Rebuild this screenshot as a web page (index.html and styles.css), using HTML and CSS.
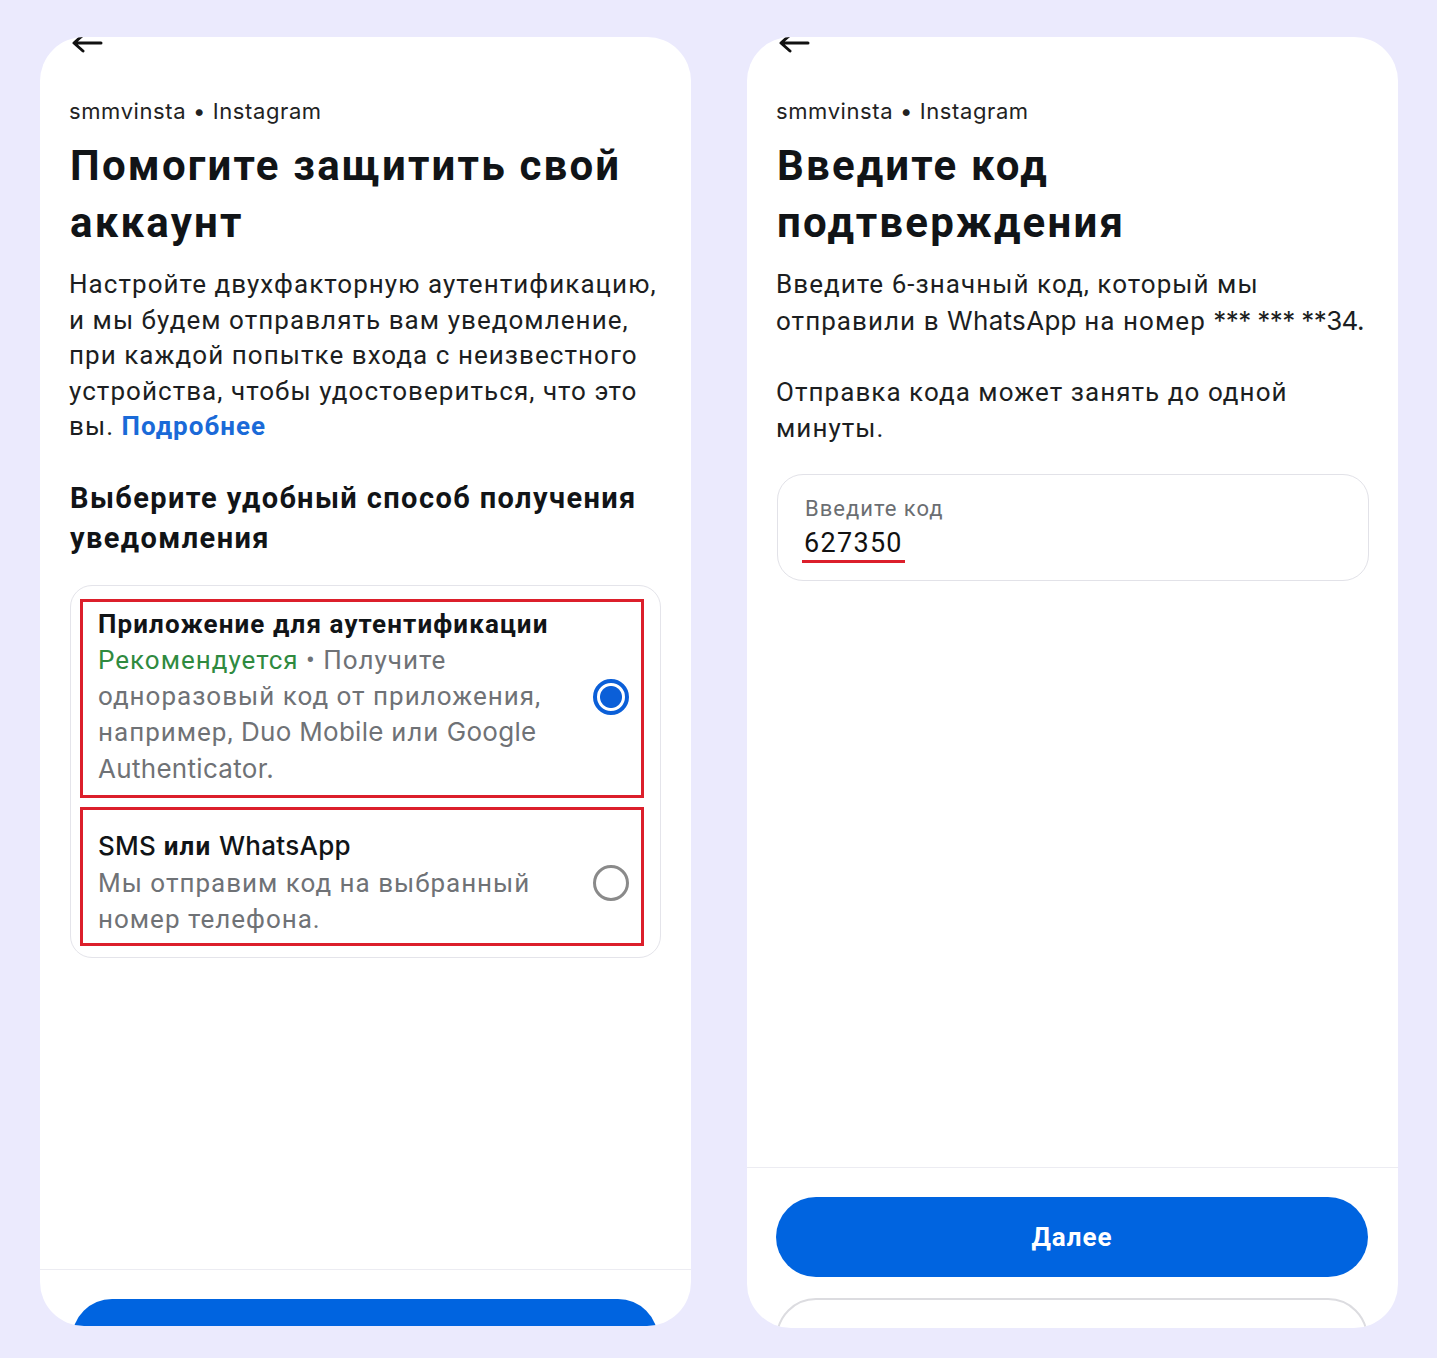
FILE: index.html
```html
<!DOCTYPE html>
<html lang="ru">
<head>
<meta charset="utf-8">
<title>Двухфакторная аутентификация</title>
<link rel="stylesheet" href="styles.css">
</head>
<body>
<div class="screens">
  <section class="card card-left">
    <svg class="back" width="32" height="20" viewBox="0 0 32 20"><path d="M30 9H4M12 1L3 9l9 8" fill="none" stroke="#111" stroke-width="3" stroke-linecap="round" stroke-linejoin="round"/></svg>
    <div class="main">
      <div class="account lat">smmvinsta • Instagram</div>
      <h1 class="title">Помогите защитить свой аккаунт</h1>
      <p class="text">Настройте двухфакторную аутентификацию, и мы будем отправлять вам уведомление, при каждой попытке входа с неизвестного устройства, чтобы удостовериться, что это вы. <a class="link" href="#">Подробнее</a></p>
      <h2 class="subtitle">Выберите удобный способ получения уведомления</h2>
      <div class="options">
        <div class="option option-first">
          <div class="opt-body">
            <div class="opt-title">Приложение для аутентификации</div>
            <div class="opt-desc"><span class="green">Рекомендуется</span> • Получите одноразовый код от приложения, например, <span class="lat">Duo Mobile</span> или <span class="lat">Google Authenticator.</span></div>
          </div>
          <span class="radio radio-on"></span>
        </div>
        <div class="option option-second">
          <div class="opt-body">
            <div class="opt-title"><span class="lat reg">SMS</span> или <span class="lat reg">WhatsApp</span></div>
            <div class="opt-desc">Мы отправим код на выбранный номер телефона.</div>
          </div>
          <span class="radio"></span>
        </div>
      </div>
    </div>
    <div class="footer footer-left">
      <div class="btn btn-primary"></div>
    </div>
  </section>

  <section class="card card-right">
    <svg class="back" width="32" height="20" viewBox="0 0 32 20"><path d="M30 9H4M12 1L3 9l9 8" fill="none" stroke="#111" stroke-width="3" stroke-linecap="round" stroke-linejoin="round"/></svg>
    <div class="main">
      <div class="account lat">smmvinsta • Instagram</div>
      <h1 class="title">Введите код подтверждения</h1>
      <p class="text">Введите 6-значный код, который мы отправили в <span class="lat">WhatsApp</span> на номер <span class="lat stars">*** *** **34.</span></p>
      <p class="text text-gap">Отправка кода может занять до одной минуты.</p>
      <div class="field">
        <div class="field-label">Введите код</div>
        <div class="field-value"><span class="code">627350</span></div>
      </div>
    </div>
    <div class="footer footer-right">
      <div class="btn btn-primary">Далее</div>
      <div class="btn btn-outline"></div>
    </div>
  </section>
</div>
</body>
</html>
```

FILE: styles.css
```css
* { box-sizing: border-box; }
html, body { margin: 0; padding: 0; }
body {
  background: #ebeafd;
  font-family: Roboto, "Noto Sans", sans-serif;
  color: #111417;
  width: 1437px;
  height: 1358px;
  overflow: hidden;
}
.screens {
  display: flex;
  gap: 56px;
  padding: 37px 39px 0 40px;
}
.card {
  position: relative;
  width: 651px;
  height: 1289px;
  background: #fff;
  border-radius: 44px;
  display: flex;
  flex-direction: column;
  overflow: hidden;
}
.card-right { height: 1291px; }
.back {
  position: absolute;
  left: 31px;
  top: -3px;
}
.main {
  flex: 1 1 auto;
  min-height: 0;
  padding: 59px 29px 0 29px;
}
.lat { font-family: Inter, "Noto Sans", sans-serif; letter-spacing: 0.3px; }
.stars { letter-spacing: -0.6px; white-space: nowrap; }
.account {
  font-size: 22px;
  line-height: 30px;
  color: #222;
  letter-spacing: 0.6px;
}
.title {
  margin: 11px 0 0 1px;
  font-size: 42px;
  line-height: 57px;
  font-weight: 700;
  letter-spacing: 2.2px;
}
.text {
  margin: 16px 0 0 0;
  font-size: 26px;
  line-height: 35.6px;
  color: #1c1e21;
  letter-spacing: 1.05px;
}
.text-gap { margin-top: 36px; }
.link { color: #1a6ad8; font-weight: 700; text-decoration: none; }
.subtitle {
  margin: 33px 0 0 1px;
  font-size: 29px;
  line-height: 40px;
  font-weight: 700;
  letter-spacing: 1.4px;
}
.options {
  margin: 27px 0 0 1px;
  width: 591px;
  border: 1px solid #e4e4ea;
  border-radius: 22px;
  padding: 13px 16px 11px 9px;
  display: flex;
  flex-direction: column;
  gap: 9px;
}
.option {
  border: 3px solid #dc1f2b;
  display: flex;
  align-items: center;
  padding: 4px 12px 8px 15px;
}
.option-second { padding: 18px 12px 5px 15px; }
.opt-body { flex: 1 1 auto; padding-right: 30px; }
.opt-title {
  font-size: 26px;
  line-height: 36px;
  font-weight: 700;
  color: #111417;
  letter-spacing: 1.1px;
}
.reg { font-weight: 500; }
.opt-desc {
  margin-top: 1px;
  font-size: 26px;
  line-height: 35.6px;
  color: #6f7276;
  letter-spacing: 1px;
}
.option-second .opt-desc { margin-top: 2px; }
.green { color: #2f8a3f; }
.radio {
  flex: 0 0 36px;
  width: 36px;
  height: 36px;
  border-radius: 50%;
  border: 3px solid #8a8a8a;
}
.radio-on {
  border: 4px solid #0b5fd8;
  background: radial-gradient(circle, #0b5fd8 0 10.5px, #fff 11.5px);
}
.footer {
  flex: 0 0 auto;
  border-top: 1.5px solid #ececf2;
  overflow: hidden;
  display: flex;
  flex-direction: column;
}
.footer-left { height: 57px; padding: 29px 33px 0 32px; }
.footer-right { height: 161px; padding: 29px 30px 0 29px; gap: 21px; }
.btn {
  flex: 0 0 80px;
  height: 80px;
  border-radius: 40px;
  display: flex;
  align-items: center;
  justify-content: center;
  font-size: 26px;
  font-weight: 700;
  letter-spacing: 1px;
}
.btn-primary { background: #0064e0; color: #fff; }
.btn-outline { border: 2px solid #dcdce0; }
.field {
  margin: 28px 0 0 1px;
  width: 592px;
  height: 107px;
  border: 1.5px solid #e2e2e8;
  border-radius: 26px;
  padding: 19px 27px 0 27px;
}
.field-label {
  font-size: 22px;
  line-height: 30px;
  color: #6b6e72;
  letter-spacing: 1px;
}
.field-value {
  font-size: 27px;
  line-height: 38px;
  color: #111;
  letter-spacing: 1.3px;
}
.code {
  display: inline-block;
  border-bottom: 3px solid #dc1f2b;
  line-height: 34px;
  padding: 0 2px;
  margin-left: -3px;
}
```
